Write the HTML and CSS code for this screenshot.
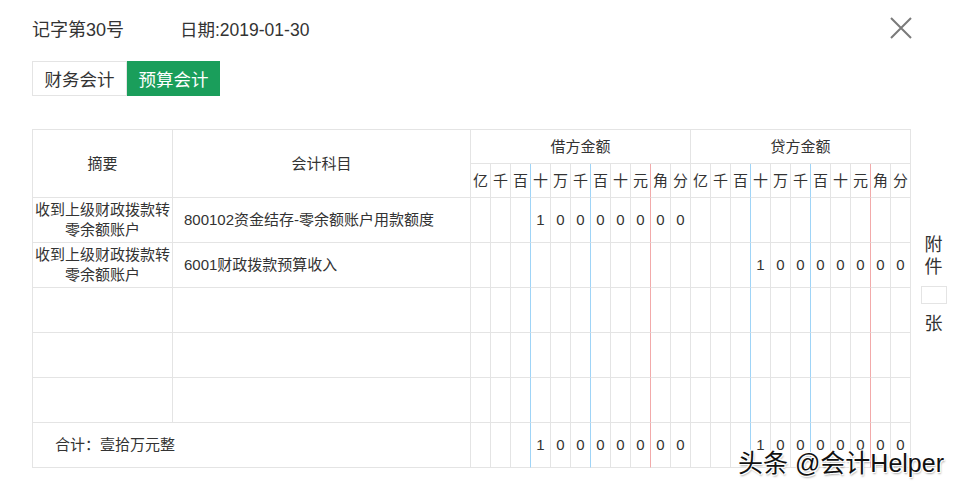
FILE: index.html
```html
<!DOCTYPE html>
<html lang="zh-CN">
<head>
<meta charset="utf-8">
<title>记字第30号</title>
<link rel="stylesheet" href="styles.css">
</head>
<body>
<div class="page">
  <header class="top">
    <div class="meta"><span class="no">记字第30号</span><span class="date">日期:2019-01-30</span></div>
    <button class="close" aria-label="关闭">
      <svg width="22" height="22" viewBox="0 0 22 22"><path d="M1 1L21 21M21 1L1 21" stroke="#7a7a7a" stroke-width="2" fill="none"/></svg>
    </button>
  </header>
  <div class="tabs">
    <button class="tab">财务会计</button><button class="tab active">预算会计</button>
  </div>
  <div class="sheet">
    <table class="ledger">
      <colgroup>
        <col class="c-sum"><col class="c-acc">
        <col class="c-d"><col class="c-d"><col class="c-d"><col class="c-d"><col class="c-d"><col class="c-d"><col class="c-d"><col class="c-d"><col class="c-d"><col class="c-d"><col class="c-d">
        <col class="c-d"><col class="c-d"><col class="c-d"><col class="c-d"><col class="c-d"><col class="c-d"><col class="c-d"><col class="c-d"><col class="c-d"><col class="c-d"><col class="c-d">
      </colgroup>
      <thead>
        <tr class="head">
          <th rowspan="2">摘要</th>
          <th rowspan="2">会计科目</th>
          <th colspan="11">借方金额</th>
          <th colspan="11">贷方金额</th>
        </tr>
        <tr class="units">
          <th>亿</th><th>千</th><th>百</th><th>十</th><th>万</th><th>千</th><th>百</th><th>十</th><th>元</th><th>角</th><th>分</th>
          <th>亿</th><th>千</th><th>百</th><th>十</th><th>万</th><th>千</th><th>百</th><th>十</th><th>元</th><th>角</th><th>分</th>
        </tr>
      </thead>
      <tbody>
        <tr class="entry">
          <td class="sum">收到上级财政拨款转零余额账户</td>
          <td class="acc">800102资金结存-零余额账户用款额度</td>
          <td></td><td></td><td></td><td>1</td><td>0</td><td>0</td><td>0</td><td>0</td><td>0</td><td>0</td><td>0</td>
          <td></td><td></td><td></td><td></td><td></td><td></td><td></td><td></td><td></td><td></td><td></td>
        </tr>
        <tr class="entry">
          <td class="sum">收到上级财政拨款转零余额账户</td>
          <td class="acc">6001财政拨款预算收入</td>
          <td></td><td></td><td></td><td></td><td></td><td></td><td></td><td></td><td></td><td></td><td></td>
          <td></td><td></td><td></td><td>1</td><td>0</td><td>0</td><td>0</td><td>0</td><td>0</td><td>0</td><td>0</td>
        </tr>
        <tr class="entry">
          <td class="sum"></td><td class="acc"></td>
          <td></td><td></td><td></td><td></td><td></td><td></td><td></td><td></td><td></td><td></td><td></td>
          <td></td><td></td><td></td><td></td><td></td><td></td><td></td><td></td><td></td><td></td><td></td>
        </tr>
        <tr class="entry">
          <td class="sum"></td><td class="acc"></td>
          <td></td><td></td><td></td><td></td><td></td><td></td><td></td><td></td><td></td><td></td><td></td>
          <td></td><td></td><td></td><td></td><td></td><td></td><td></td><td></td><td></td><td></td><td></td>
        </tr>
        <tr class="entry">
          <td class="sum"></td><td class="acc"></td>
          <td></td><td></td><td></td><td></td><td></td><td></td><td></td><td></td><td></td><td></td><td></td>
          <td></td><td></td><td></td><td></td><td></td><td></td><td></td><td></td><td></td><td></td><td></td>
        </tr>
        <tr class="total">
          <td class="words" colspan="2">合计：壹拾万元整</td>
          <td></td><td></td><td></td><td>1</td><td>0</td><td>0</td><td>0</td><td>0</td><td>0</td><td>0</td><td>0</td>
          <td></td><td></td><td></td><td>1</td><td>0</td><td>0</td><td>0</td><td>0</td><td>0</td><td>0</td><td>0</td>
        </tr>
      </tbody>
    </table>
    <aside class="attach">
      <span class="attach-label">附<br>件</span>
      <span class="attach-box"></span>
      <span class="attach-label unit">张</span>
    </aside>
  </div>
  <div class="watermark">头条 @会计Helper</div>
</div>
</body>
</html>
```

FILE: styles.css
```css
html, body {
  margin: 0;
  background: #fff;
}

body {
  font-family: "Liberation Sans", "Noto Sans CJK SC", sans-serif;
  color: #333;
}

.page {
  position: relative;
  width: 959px;
  height: 491px;
  padding-left: 32px;
  box-sizing: border-box;
  overflow: hidden;
}

.top {
  width: 880px;
  padding-top: 18px;
  display: flex;
  justify-content: space-between;
  align-items: flex-start;
}

.meta {
  font-size: 17.5px;
  line-height: 24px;
}

.no {
  display: inline-block;
  width: 148px;
  font-size: 18px;
}

.close {
  margin: -1px 0 0;
  padding: 0;
  border: 0;
  background: none;
  width: 22px;
  height: 22px;
  display: block;
}

.close svg {
  display: block;
}

.tabs {
  margin-top: 19px;
  display: flex;
}

.tab {
  height: 35px;
  margin: 0;
  padding: 0;
  font-family: inherit;
  font-size: 17.5px;
  color: #333;
  background: #fff;
  border: 1px solid #e4e4e4;
  box-sizing: border-box;
  width: 95px;
}

.tab.active {
  width: 93px;
  background: #1a9e5b;
  border-color: #1a9e5b;
  color: #fff;
}

.sheet {
  margin-top: 33px;
  display: flex;
  align-items: flex-start;
}

.ledger {
  table-layout: fixed;
  width: 879px;
  border-collapse: separate;
  border-spacing: 0;
  border-top: 1px solid #e4e4e4;
  border-left: 1px solid #e4e4e4;
  font-size: 15px;
  color: #333;
}

.c-sum { width: 140px; }
.c-acc { width: 298px; }
.c-d { width: 20px; }

.ledger th,
.ledger td {
  padding: 0;
  border-right: 1px solid #e4e4e4;
  border-bottom: 1px solid #e4e4e4;
  font-weight: normal;
  text-align: center;
  vertical-align: middle;
  line-height: 20px;
}

.ledger tr.head,
.ledger tr.units {
  height: 34px;
}

.ledger tr.entry,
.ledger tr.total {
  height: 45px;
}

.ledger td.sum {
  padding: 0 1px;
}

.ledger td.acc {
  text-align: left;
  padding-left: 11px;
}

.ledger td.words {
  text-align: left;
  padding-left: 22px;
}

/* unit separators: blue before 十(万) and 百, red before 角 */
.units th:nth-child(3),
.units th:nth-child(6),
.units th:nth-child(14),
.units th:nth-child(17),
.entry td:nth-child(5),
.entry td:nth-child(8),
.entry td:nth-child(16),
.entry td:nth-child(19),
.total td:nth-child(4),
.total td:nth-child(7),
.total td:nth-child(15),
.total td:nth-child(18) {
  border-right-color: #9fd4f7;
}

.units th:nth-child(9),
.units th:nth-child(20),
.entry td:nth-child(11),
.entry td:nth-child(22),
.total td:nth-child(10),
.total td:nth-child(21) {
  border-right-color: #f2aaaa;
}

.attach {
  width: 45px;
  padding-top: 105px;
  display: flex;
  flex-direction: column;
  align-items: center;
}

.attach-label {
  font-size: 18px;
  line-height: 22px;
  text-align: center;
}

.attach-box {
  margin-top: 8px;
  width: 26px;
  height: 18px;
  border: 1px solid #e4e4e4;
  box-sizing: border-box;
}

.attach-label.unit {
  margin-top: 9px;
}

.watermark {
  position: absolute;
  right: 15px;
  bottom: 14px;
  font-size: 25px;
  line-height: 28px;
  color: #111;
  text-shadow: 1px 1px 0 #fff, -1px -1px 0 #fff, 1px -1px 0 #fff, -1px 1px 0 #fff, 1px 2px 2px rgba(0,0,0,0.35);
  white-space: nowrap;
}
```
